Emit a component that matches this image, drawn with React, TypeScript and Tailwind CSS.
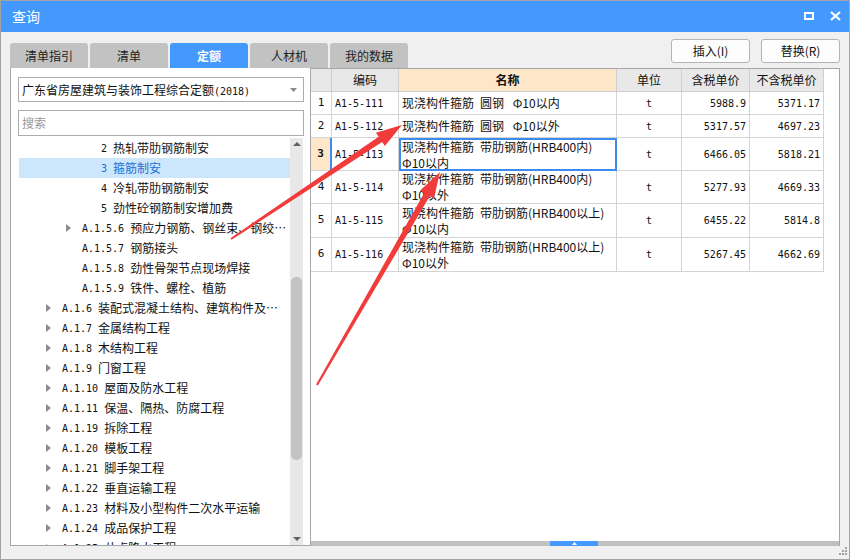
import React from 'react'

const mono = "font-['DejaVu_Sans_Mono','Noto_Sans_CJK_SC',monospace]"

type Node = { lvl: number; code: string; name: string; arrow?: boolean; sel?: boolean }

const tree: Node[] = [
  { lvl: 3, code: '2', name: '热轧带肋钢筋制安' },
  { lvl: 3, code: '3', name: '箍筋制安', sel: true },
  { lvl: 3, code: '4', name: '冷轧带肋钢筋制安' },
  { lvl: 3, code: '5', name: '劲性砼钢筋制安增加费' },
  { lvl: 2, code: 'A.1.5.6', name: '预应力钢筋、钢丝束、钢绞…', arrow: true },
  { lvl: 2, code: 'A.1.5.7', name: '钢筋接头' },
  { lvl: 2, code: 'A.1.5.8', name: '劲性骨架节点现场焊接' },
  { lvl: 2, code: 'A.1.5.9', name: '铁件、螺栓、植筋' },
  { lvl: 1, code: 'A.1.6', name: '装配式混凝土结构、建筑构件及…', arrow: true },
  { lvl: 1, code: 'A.1.7', name: '金属结构工程', arrow: true },
  { lvl: 1, code: 'A.1.8', name: '木结构工程', arrow: true },
  { lvl: 1, code: 'A.1.9', name: '门窗工程', arrow: true },
  { lvl: 1, code: 'A.1.10', name: '屋面及防水工程', arrow: true },
  { lvl: 1, code: 'A.1.11', name: '保温、隔热、防腐工程', arrow: true },
  { lvl: 1, code: 'A.1.19', name: '拆除工程', arrow: true },
  { lvl: 1, code: 'A.1.20', name: '模板工程', arrow: true },
  { lvl: 1, code: 'A.1.21', name: '脚手架工程', arrow: true },
  { lvl: 1, code: 'A.1.22', name: '垂直运输工程', arrow: true },
  { lvl: 1, code: 'A.1.23', name: '材料及小型构件二次水平运输', arrow: true },
  { lvl: 1, code: 'A.1.24', name: '成品保护工程', arrow: true },
  { lvl: 1, code: 'A.1.25', name: '井点降水工程', arrow: true },
]

const rows = [
  { code: 'A1-5-111', name: ['现浇构件箍筋\u2002圆钢\u2002 Φ10以内'], price: '5988.9', net: '5371.17', h: 'h-[23px]' },
  { code: 'A1-5-112', name: ['现浇构件箍筋\u2002圆钢\u2002 Φ10以外'], price: '5317.57', net: '4697.23', h: 'h-[23px]' },
  { code: 'A1-5-113', name: ['现浇构件箍筋\u2002带肋钢筋(HRB400内)', 'Φ10以内'], price: '6466.05', net: '5818.21', h: 'h-[33px]', sel: true },
  { code: 'A1-5-114', name: ['现浇构件箍筋\u2002带肋钢筋(HRB400内)', 'Φ10以外'], price: '5277.93', net: '4669.33', h: 'h-[33px]' },
  { code: 'A1-5-115', name: ['现浇构件箍筋\u2002带肋钢筋(HRB400以上)', 'Φ10以内'], price: '6455.22', net: '5814.8', h: 'h-[34px]' },
  { code: 'A1-5-116', name: ['现浇构件箍筋\u2002带肋钢筋(HRB400以上)', 'Φ10以外'], price: '5267.45', net: '4662.69', h: 'h-[34px]' },
]

const tabs = ['清单指引', '清单', '定额', '人材机', '我的数据']

// tapered annotation arrow, tail -> tip
function arrowPoints(tx: number, ty: number, px: number, py: number) {
  const dx = px - tx, dy = py - ty
  const len = Math.hypot(dx, dy)
  const ux = dx / len, uy = dy / len
  const nx = -uy, ny = ux
  const L = 26, W = 8, w0 = 1, w1 = 3.2
  const bx = px - L * ux, by = py - L * uy
  const pts = [
    [tx + w0 * nx, ty + w0 * ny], [bx + w1 * nx, by + w1 * ny], [bx + W * nx, by + W * ny],
    [px, py],
    [bx - W * nx, by - W * ny], [bx - w1 * nx, by - w1 * ny], [tx - w0 * nx, ty - w0 * ny],
  ]
  return pts.map(p => p.map(v => v.toFixed(1)).join(',')).join(' ')
}

export default function App() {
  return (
    <div className="relative w-[850px] h-[560px] border border-[#a3a3a3] bg-[#f0f0f0] flex flex-col overflow-hidden font-['Noto_Sans_CJK_SC',sans-serif] text-[#111]">
      {/* 标题栏 */}
      <div className="h-[31px] bg-[#4499ff] flex items-center justify-between pl-[11px] pr-[8px] shrink-0">
        <span className="text-white text-[14px]">查询</span>
        <div className="flex items-center gap-[16px] pb-[1px]">
          <div className="w-[10px] h-[8px] border-2 border-white" />
          <svg width="11" height="10" viewBox="0 0 11 10">
            <path d="M1 1 L10 9 M10 1 L1 9" stroke="white" strokeWidth="2.2" />
          </svg>
        </div>
      </div>

      {/* 页签 + 按钮 */}
      <div className="h-[36px] flex justify-between pl-[9px] pr-[9px] shrink-0">
        <div className="flex items-end gap-[2px]">
          {tabs.map(t => (
            <div
              key={t}
              className={
                t === '定额'
                  ? 'w-[78px] h-[25px] rounded-t-[3px] bg-[#4499ff] text-white font-bold text-[12px] flex items-center justify-center'
                  : 'w-[78px] h-[25px] rounded-t-[3px] bg-[#c2c2c2] text-[#222] text-[12px] flex items-center justify-center'
              }
            >
              {t}
            </div>
          ))}
        </div>
        <div className="flex gap-[11px] mt-[7px]">
          <button className="w-[79px] h-[24px] bg-[#fdfdfd] border border-[#b4b4b4] rounded-[3px] text-[12px]">插入(I)</button>
          <button className="w-[79px] h-[24px] bg-[#fdfdfd] border border-[#b4b4b4] rounded-[3px] text-[12px]">替换(R)</button>
        </div>
      </div>

      {/* 主区域 */}
      <div className="h-[478px] flex pl-[9px] shrink-0">
        {/* 左侧定额树 */}
        <div className="w-[300px] h-full bg-white border-l border-b border-[#a6a6a6] flex flex-col pl-[7px] pr-[6px] pt-[9px]">
          <div className="h-[25px] border border-[#acacac] flex items-center justify-between pl-[3px] pr-[6px] shrink-0">
            <span className="text-[12px] whitespace-nowrap">
              广东省房屋建筑与装饰工程综合定额<span className={`${mono} text-[10px]`}>(2018)</span>
            </span>
            <svg width="7" height="4" viewBox="0 0 7 4"><path d="M0 0 H7 L3.5 4 Z" fill="#8a8a8a" /></svg>
          </div>
          <div className="h-[26px] mt-[8px] border border-[#acacac] flex items-center pl-[3px] text-[12px] text-[#9a9a9a] shrink-0">搜索</div>
          <div className="flex-1 mt-[2px] ml-[1px] flex min-h-0">
            <div className="w-[271px] overflow-hidden">
              {tree.map(n => (
                <div
                  key={n.code + n.name}
                  className={`h-[20px] flex items-center whitespace-nowrap ${n.sel ? 'bg-[#cce6fc] text-[#1c6fd6]' : ''}`}
                >
                  <div style={{ width: n.lvl * 20 + 7 }} className="shrink-0" />
                  <div className="w-[16px] shrink-0">
                    {n.arrow && (
                      <svg width="5" height="8" viewBox="0 0 5 8"><path d="M0 0 L5 4 L0 8 Z" fill="#8c8c8c" /></svg>
                    )}
                  </div>
                  <span className={`${mono} text-[10px] ${n.lvl === 3 ? '-ml-[1px]' : ''}`}>{n.code}</span>
                  <span className="ml-[6px] text-[12px] overflow-hidden">{n.name}</span>
                </div>
              ))}
            </div>
            {/* 竖向滚动条 */}
            <div className="w-[13px] bg-[#e8e8e8] flex flex-col items-center">
              <svg className="mt-[4px]" width="8" height="4" viewBox="0 0 8 4"><path d="M0 4 L4 0 L8 4 Z" fill="#5e5e5e" /></svg>
              <div className="mt-[131px] w-[11px] h-[183px] rounded-[5px] bg-[#c3c3c3]" />
              <svg className="mt-auto mb-[4px]" width="8" height="4" viewBox="0 0 8 4"><path d="M0 0 L8 0 L4 4 Z" fill="#5e5e5e" /></svg>
            </div>
          </div>
        </div>

        {/* 右侧定额表 */}
        <div className="w-[530px] h-full bg-white border-t border-l border-r border-[#a6a6a6] flex flex-col">
          <div className="flex-1">
            <div className="grid grid-cols-[21px_67px_218px_65px_68px_74px] text-[12px]">
              <div className="h-[23px] bg-[#e8e8e8] border-r border-b border-[#cfcfcf]" />
              <div className="h-[23px] bg-[#e8e8e8] border-r border-b border-[#cfcfcf] flex items-center justify-center">编码</div>
              <div className="h-[23px] bg-[#fee6c9] border-r border-b border-[#cfcfcf] flex items-center justify-center font-bold">名称</div>
              <div className="h-[23px] bg-[#e8e8e8] border-r border-b border-[#cfcfcf] flex items-center justify-center">单位</div>
              <div className="h-[23px] bg-[#e8e8e8] border-r border-b border-[#cfcfcf] flex items-center justify-center">含税单价</div>
              <div className="h-[23px] bg-[#e8e8e8] border-r border-b border-[#cfcfcf] flex items-center justify-center">不含税单价</div>
              {rows.map((r, i) => (
                <React.Fragment key={r.code}>
                  <div
                    className={`${r.h} border-b border-[#d4d4d4] flex items-center justify-center ${mono} text-[11px] ${
                      r.sel ? 'bg-[#fee6c9] font-bold border-r-2 border-r-[#3c8cf0]' : 'border-r'
                    }`}
                  >
                    {i + 1}
                  </div>
                  <div className={`${r.h} border-r border-b border-[#d4d4d4] flex items-center pl-[3px] ${mono} text-[10px]`}>{r.code}</div>
                  <div
                    className={`${r.h} flex flex-col justify-center leading-[16px] whitespace-pre ${
                      r.sel ? 'border-2 border-[#3c8cf0] pl-[1px]' : 'border-r border-b border-[#d4d4d4] pl-[3px]'
                    }`}
                  >
                    {r.name.map(l => <span key={l}>{l}</span>)}
                  </div>
                  <div className={`${r.h} border-r border-b border-[#d4d4d4] flex items-center justify-center ${mono} text-[10px]`}>t</div>
                  <div className={`${r.h} border-r border-b border-[#d4d4d4] flex items-center justify-end pr-[3px] ${mono} text-[10px]`}>{r.price}</div>
                  <div className={`${r.h} border-r border-b border-[#d4d4d4] flex items-center justify-end pr-[3px] ${mono} text-[10px]`}>{r.net}</div>
                </React.Fragment>
              ))}
            </div>
          </div>
          {/* 横向滚动条 */}
          <div className="h-[5px] bg-[#c0c0c0] flex">
            <div className="ml-[239px] w-[48px] h-full bg-[#4499ff] flex items-center justify-center">
              <svg width="5" height="3" viewBox="0 0 5 3"><path d="M0 3 L2.5 0 L5 3 Z" fill="white" /></svg>
            </div>
          </div>
        </div>
      </div>

      {/* 右下角拖拽 */}
      <div className="flex-1 flex justify-end items-end pr-[1px] pb-[2px]">
        <svg width="10" height="10" viewBox="0 0 10 10" fill="#a0a0a0">
          <rect x="7" y="0" width="2" height="2" />
          <rect x="4" y="3" width="2" height="2" />
          <rect x="7" y="3" width="2" height="2" />
          <rect x="1" y="6" width="2" height="2" />
          <rect x="4" y="6" width="2" height="2" />
          <rect x="7" y="6" width="2" height="2" />
        </svg>
      </div>

      {/* 红色标注箭头 */}
      <svg className="absolute left-[-1px] top-[-1px] pointer-events-none" width="850" height="560">
        <polygon points={arrowPoints(231, 239, 402, 125)} fill="#f23c3c" />
        <polygon points={arrowPoints(317, 385, 440, 172)} fill="#f23c3c" />
      </svg>
    </div>
  )
}
